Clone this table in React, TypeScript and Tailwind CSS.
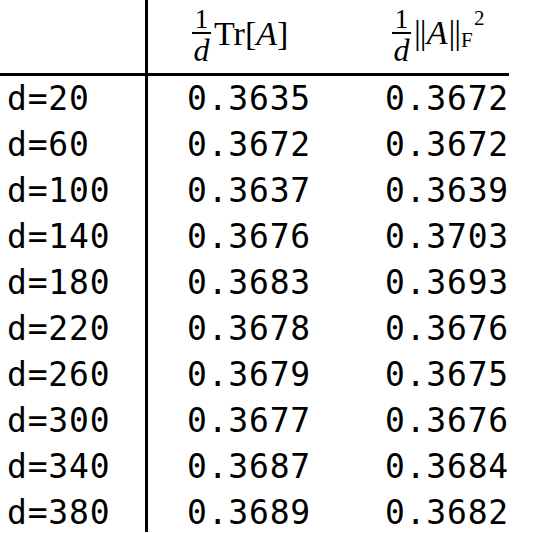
import React from "react";

const rows: [string, string, string][] = [
  ["d=20", "0.3635", "0.3672"],
  ["d=60", "0.3672", "0.3672"],
  ["d=100", "0.3637", "0.3639"],
  ["d=140", "0.3676", "0.3703"],
  ["d=180", "0.3683", "0.3693"],
  ["d=220", "0.3678", "0.3676"],
  ["d=260", "0.3679", "0.3675"],
  ["d=300", "0.3677", "0.3676"],
  ["d=340", "0.3687", "0.3684"],
  ["d=380", "0.3689", "0.3682"],
];

const mono = "font-['DejaVu_Sans_Mono',monospace] text-[33px] tracking-[0.8px] text-black";
const serif = "font-['Liberation_Serif','DejaVu_Serif',serif] text-black";

function Frac() {
  return (
    <span className="inline-flex flex-col items-center mr-[3px]">
      <span className={`${serif} text-[27px] leading-[24px]`}>1</span>
      <span className="block w-[19px] h-[1.5px] bg-black mt-[1px]" />
      <span className={`${serif} italic text-[32px] leading-[32px]`}>d</span>
    </span>
  );
}

export default function App() {
  return (
    <div className="w-[540px] h-[533px] bg-white overflow-hidden">
      <div className="w-[509px]">
        <div className="flex h-[76px] border-b-[3px] border-black">
          <div className="w-[148px] border-r-[3px] border-black shrink-0" />
          <div className="w-[200px] pl-[44px] flex items-center">
            <Frac />
            <span className={`${serif} text-[34px] leading-none mb-[6px]`}>
              Tr[<span className="italic">A</span>]
            </span>
          </div>
          <div className="flex-1 pl-[44px] flex items-center">
            <Frac />
            <span className={`${serif} text-[34px] leading-none mb-[6px] flex items-start`}>
              <span className="tracking-[-1px]">||</span>
              <span className="italic ml-[1px] mr-[1px]">A</span>
              <span className="tracking-[-1px]">||</span>
              <span className="flex flex-col text-[21px] leading-none ml-[1px]">
                <span className="ml-[13px] -mt-[8px]">2</span>
                <span className="mt-[1px]">F</span>
              </span>
            </span>
          </div>
        </div>
        <div>
          {rows.map(([a, b, c], i) => {
            const last = i === rows.length - 1;
            const rowCls = last ? "flex h-[42px] pt-[4px] leading-[38px]" : "flex h-[46px] leading-[46px]";
            return (
              <div key={a} className={rowCls}>
                <div className={`w-[148px] shrink-0 border-r-[3px] border-black pl-[7px] ${last ? "-mt-[4px] pt-[4px]" : ""} ${mono}`}>{a}</div>
                <div className={`w-[200px] pl-[39px] ${mono}`}>{b}</div>
                <div className={`flex-1 pl-[39px] ${mono}`}>{c}</div>
              </div>
            );
          })}
        </div>
      </div>
    </div>
  );
}
